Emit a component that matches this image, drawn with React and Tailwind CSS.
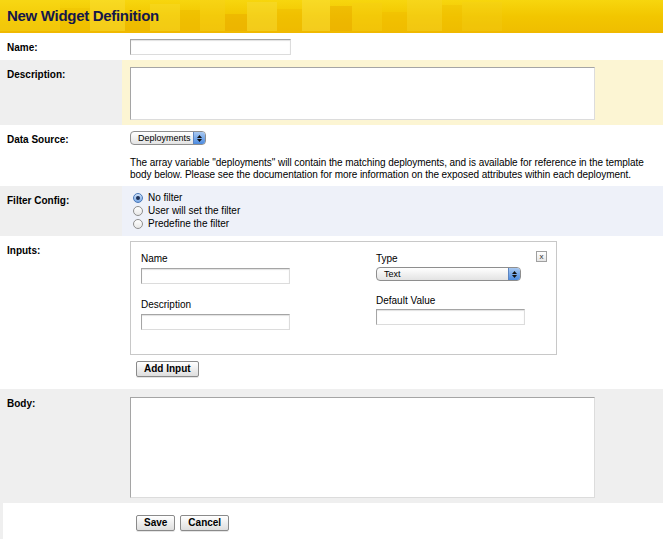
import React, { useState } from "react";

const font = { fontFamily: '"Liberation Sans", Arial, sans-serif' };

const Label = ({ children }) => (
  <div className="pl-[7px] pt-[7px] text-[10px] font-bold text-black">{children}</div>
);

const TextInput = ({ className = "" }) => (
  <input
    type="text"
    className={`block h-[16px] border border-[#a5a5a5] border-b-[#dcdcdc] border-r-[#dcdcdc] bg-white shadow-[inset_0_1px_1px_rgba(0,0,0,0.12)] outline-none ${className}`}
  />
);

const MacSelect = ({ value, className = "" }) => (
  <div
    className={`flex h-[14px] items-center rounded-[4px] border border-[#8e8e8e] bg-gradient-to-b from-white to-[#e3e3e3] text-[9px] text-black ${className}`}
  >
    <span className="flex-1 pl-[7px] leading-none">{value}</span>
    <span className="flex h-full w-[12px] flex-col items-center justify-center gap-[1px] rounded-r-[3px] bg-gradient-to-b from-[#a8c8f0] to-[#4b8be0] border-l border-[#5c84c0]">
      <svg width="5" height="3" viewBox="0 0 5 3"><path d="M0 3 L2.5 0 L5 3 Z" fill="#111" /></svg>
      <svg width="5" height="3" viewBox="0 0 5 3"><path d="M0 0 L2.5 3 L5 0 Z" fill="#111" /></svg>
    </span>
  </div>
);

const Button = ({ children }) => (
  <button className="h-[16px] rounded-[2px] border border-[#8a8a8a] bg-gradient-to-b from-white to-[#dedede] px-[7px] text-[10px] font-bold leading-none text-black shadow-[0_1px_0_rgba(0,0,0,0.1)]">
    {children}
  </button>
);

const Radio = ({ checked, label }) => (
  <label className="flex h-[13px] items-center gap-[5px] text-[10px] text-black">
    <span
      className={`flex h-[10px] w-[10px] items-center justify-center rounded-full border ${
        checked ? "border-[#4a78b8] bg-gradient-to-b from-[#cfe1f8] to-[#7aa9e6]" : "border-[#8e8e8e] bg-gradient-to-b from-white to-[#e8e8e8]"
      }`}
    >
      {checked && <span className="h-[4px] w-[4px] rounded-full bg-[#1c2f55]" />}
    </span>
    {label}
  </label>
);

// soft mosaic of yellow tiles behind the title
const tiles = [
  ["w-[60px]", "bg-[#f7da20]/30", "mt-[0px]"],
  ["w-[30px]", "bg-[#eec000]/40", "mt-[8px]"],
  ["w-[35px]", "bg-[#f9e040]/40", "mt-[0px]"],
  ["w-[25px]", "bg-[#eab400]/40", "mt-[12px]"],
  ["w-[30px]", "bg-[#f8dc30]/40", "mt-[4px]"],
  ["w-[20px]", "bg-[#eeb800]/45", "mt-[10px]"],
  ["w-[25px]", "bg-[#f6d020]/35", "mt-[0px]"],
  ["w-[22px]", "bg-[#e9a800]/45", "mt-[14px]"],
  ["w-[30px]", "bg-[#f8de40]/40", "mt-[2px]"],
  ["w-[25px]", "bg-[#edb600]/40", "mt-[9px]"],
  ["w-[28px]", "bg-[#f9e048]/40", "mt-[0px]"],
  ["w-[22px]", "bg-[#e8a800]/45", "mt-[6px]"],
  ["w-[30px]", "bg-[#f5cf18]/35", "mt-[3px]"],
  ["w-[25px]", "bg-[#efba00]/40", "mt-[12px]"],
  ["w-[35px]", "bg-[#f7d830]/35", "mt-[0px]"],
  ["w-[20px]", "bg-[#eebb00]/35", "mt-[5px]"],
  ["w-[40px]", "bg-[#f5d020]/25", "mt-[2px]"],
];

const Header = () => (
  <div className="relative h-[33px] overflow-hidden bg-gradient-to-b from-[#f7d60e] via-[#f2c600] to-[#efbd00]">
    <div className="absolute inset-0 flex">
      {tiles.map(([w, bg, mt], i) => (
        <div key={i} className={`${w} ${bg} ${mt}`} />
      ))}
    </div>
    <div className="absolute inset-x-0 bottom-0 h-[2px] bg-[#f0b900]" />
    <h1 className="relative pl-[7px] pt-[8px] text-[15px] font-bold leading-none tracking-[-0.3px] text-[#15174a]">
      New Widget Definition
    </h1>
  </div>
);

export default function App() {
  const [filter, setFilter] = useState("none");

  return (
    <div className="min-h-[539px] w-[663px] bg-white" style={font}>
      <Header />

      <div className="grid grid-cols-[122px_1fr]">
        {/* Name */}
        <div className="h-[27px]">
          <Label>Name:</Label>
        </div>
        <div className="pl-[8px] pt-[6px]">
          <TextInput className="w-[161px]" />
        </div>

        {/* Description */}
        <div className="h-[65px] bg-[#efefef]">
          <Label>Description:</Label>
        </div>
        <div className="bg-[#fcf5d3] pl-[8px] pt-[7px]">
          <textarea className="block h-[53px] w-[465px] resize-none border border-[#a5a5a5] border-b-[#dcdcdc] border-r-[#dcdcdc] bg-white outline-none" />
        </div>

        {/* Data Source */}
        <div className="h-[61px]">
          <Label>Data Source:</Label>
        </div>
        <div className="pl-[8px] pt-[6px]">
          <MacSelect value="Deployments" className="w-[76px]" />
          <p className="mt-[12px] pr-[12px] text-[10px] leading-[12px] tracking-[-0.06px] text-black">
            The array variable "deployments" will contain the matching deployments, and is available for reference in the template
            body below. Please see the documentation for more information on the exposed attributes within each deployment.
          </p>
        </div>

        {/* Filter Config */}
        <div className="h-[50px] bg-[#efefef]">
          <Label>Filter Config:</Label>
        </div>
        <div className="bg-[#eef1f9] pl-[11px] pt-[5px]">
          <div onClick={() => setFilter("none")}><Radio checked={filter === "none"} label="No filter" /></div>
          <div onClick={() => setFilter("user")}><Radio checked={filter === "user"} label="User will set the filter" /></div>
          <div onClick={() => setFilter("predefine")}><Radio checked={filter === "predefine"} label="Predefine the filter" /></div>
        </div>

        {/* Inputs */}
        <div className="h-[153px]">
          <Label>Inputs:</Label>
        </div>
        <div className="pl-[8px] pt-[5px]">
          <div className="relative h-[114px] w-[427px] border border-[#c8c8c8] bg-white">
            <button className="absolute right-[9px] top-[9px] flex h-[11px] w-[11px] items-center justify-center border border-[#a0a0a0] bg-gradient-to-b from-white to-[#e6e6e6] text-[8px] leading-none text-[#333]">
              x
            </button>
            <div className="grid grid-cols-[235px_1fr] pl-[10px] pt-[11px]">
              <div>
                <div className="text-[10px] leading-[12px] text-black">Name</div>
                <TextInput className="mt-[3px] w-[149px]" />
                <div className="mt-[15px] text-[10px] leading-[12px] text-black">Description</div>
                <TextInput className="mt-[3px] w-[149px]" />
              </div>
              <div>
                <div className="text-[10px] leading-[12px] text-black">Type</div>
                <MacSelect value="Text" className="mt-[2px] w-[145px]" />
                <div className="mt-[14px] text-[10px] leading-[12px] text-black">Default Value</div>
                <TextInput className="mt-[2px] w-[149px]" />
              </div>
            </div>
          </div>
          <div className="flex pl-[6px] pt-[6px]">
            <Button>Add Input</Button>
          </div>
        </div>

        {/* Body */}
        <div className="h-[114px] bg-[#efefef]">
          <Label>Body:</Label>
        </div>
        <div className="bg-[#efefef] pl-[8px] pt-[8px]">
          <textarea className="block h-[101px] w-[465px] resize-none border border-[#a5a5a5] border-b-[#dcdcdc] border-r-[#dcdcdc] bg-white outline-none" />
        </div>

        {/* Actions */}
        <div className="h-[36px] border-l-[3px] border-[#efefef]" />
        <div className="flex gap-[5px] pl-[14px] pt-[12px]">
          <Button>Save</Button>
          <Button>Cancel</Button>
        </div>
      </div>
    </div>
  );
}
